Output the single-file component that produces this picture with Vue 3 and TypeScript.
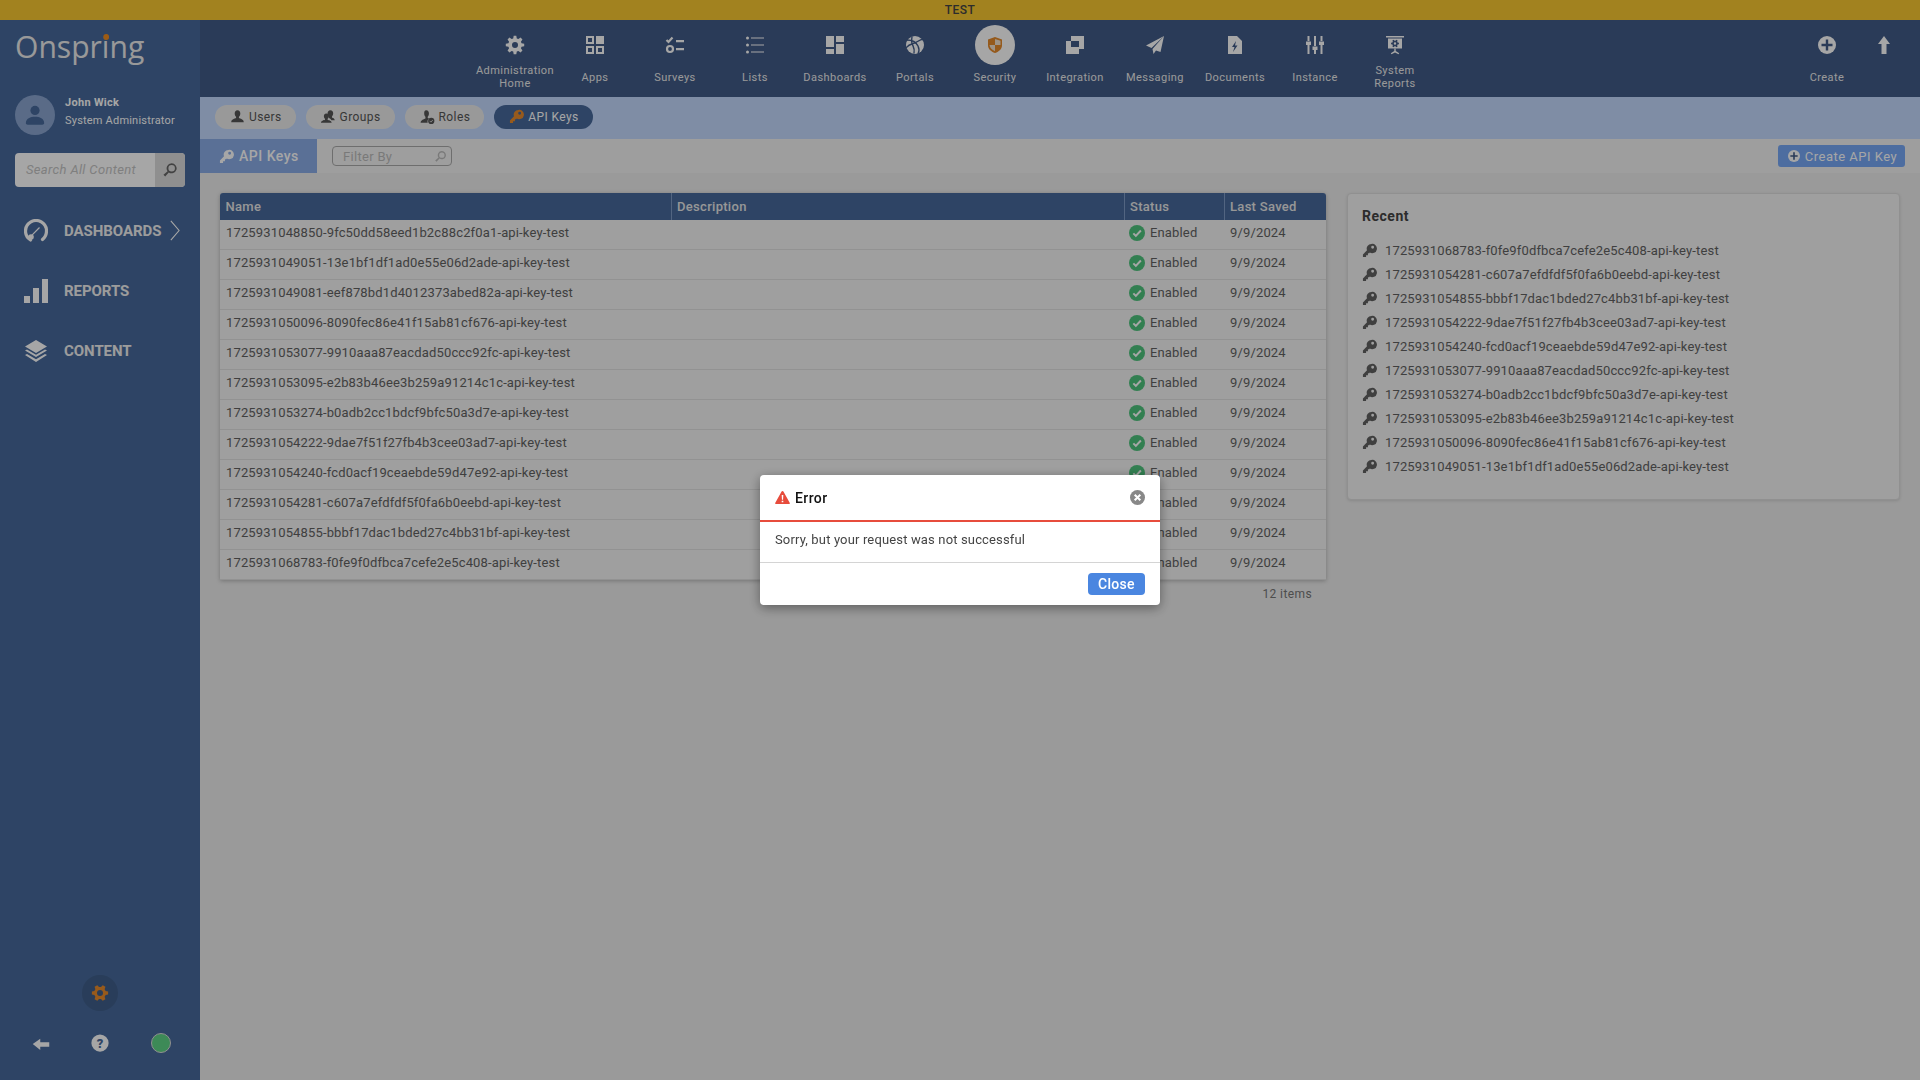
<script setup lang="ts">
// builds a cog outline, the font icons in the app are all slightly different sizes
function cog(cx: number, cy: number, outer: number, inner: number, hole: number, teeth: number) {
  const pts: string[] = []
  const step = (Math.PI * 2) / teeth
  for (let i = 0; i < teeth; i++) {
    const a = i * step
    const list: [number, number][] = [
      [inner, a - step * 0.34],
      [outer, a - step * 0.18],
      [outer, a + step * 0.18],
      [inner, a + step * 0.34]
    ]
    for (const [r, t] of list) {
      pts.push(`${(cx + r * Math.cos(t)).toFixed(2)} ${(cy + r * Math.sin(t)).toFixed(2)}`)
    }
  }
  return `M${pts.join('L')}ZM${cx - hole} ${cy}a${hole} ${hole} 0 1 0 ${hole * 2} 0a${hole} ${hole} 0 1 0 ${-hole * 2} 0Z`
}

const dark = '#415b87'
const key =
  '<path fill-rule="evenodd" d="M15 1.500a7.500 7.500 0 0 0-7 10.200L1.500 18.200v4.300h5v-3h3v-3h2l1-1.200A7.500 7.500 0 1 0 15 1.500zm2 3a2.300 2.300 0 1 1 0 4.600 2.300 2.300 0 0 1 0-4.600z"/>'

const icons: Record<string, string> = {
  admin: `<path fill-rule="evenodd" d="${cog(12, 12, 9.3, 6.8, 3, 8)}"/>`,
  apps: '<path fill-rule="evenodd" d="M3 3h8v8H3zM5 5v4h4V5zM13 3h8v8h-8zM3 13h8v8H3zM5 15v4h4v-4zM13 13h8v8h-8zM15 15v4h4v-4z"/>',
  surveys:
    '<path d="M3.500 7l2 2 4-4.500" fill="none" stroke="currentColor" stroke-width="2.200"/><path d="M13 7h8v2.200h-8zM13 15h8v2.200h-8z"/><circle cx="7" cy="16" r="3" fill="none" stroke="currentColor" stroke-width="2.200"/>',
  lists:
    '<circle cx="4.500" cy="5" r="1.500"/><circle cx="4.500" cy="12" r="1.500"/><circle cx="4.500" cy="19" r="1.500"/><path d="M8 4.400h13v1.200H8zM8 11.400h13v1.200H8zM8 18.400h13v1.200H8z"/>',
  dashboards: '<path d="M3 3h8v11H3zM13 3h8v6h-8zM13 11h8v10h-8zM3 16h8v5H3z"/>',
  portals: `<circle cx="12" cy="12" r="9"/><g fill="none" stroke="${dark}" stroke-width="1.400"><path d="M4 7c5 0 9 2 11 6s1 6 0 8"/><path d="M20 6c-4 1-7 4-11 5s-5 3-6 4"/><path d="M9 3.500c0 2-1 4 0 7s3 4 2 10"/></g>`,
  shield:
    '<path fill="#e58a2c" d="M12 4l7 2.500v5.500c0 4-2.800 6.500-7 8-4.200-1.500-7-4-7-8V6.500z"/><path fill="#f3e3cf" d="M12 6v6h5.500V7.800zM12 12H6.500c.3 2.800 2.500 4.900 5.500 6.200z"/>',
  integration: `<path d="M8 3h13v13H8z"/><path d="M3 8h13v13H3z"/><path fill="${dark}" d="M8 8h8v6H8z"/>`,
  messaging: '<path d="M21 3L3 12.500l5.500 2.500zM21 3L9.500 16l1 5 2.500-3.500 4.500 1.500z"/>',
  documents: `<path d="M5 3h9l5 5v13H5z"/><path fill="${dark}" d="M13 8l-4 6h2.500L10 19l4.500-6.500H12z"/>`,
  instance:
    '<path d="M4.500 3h2v5h-2zM4.500 12h2v9h-2zM11 3h2v10h-2zM11 17h2v4h-2zM17.500 3h2v5h-2zM17.500 12h2v9h-2zM3 8.500h5V12H3zM9.500 13.500h5V17h-5zM16 8.500h5V12h-5z"/>',
  reports: `<path d="M3 3h18v1.500H3zM5 5.500h14v10H5z"/><path fill="${dark}" fill-rule="evenodd" d="${cog(12, 10.5, 4, 2.8, 1.2, 6)}"/><path d="M11.300 15.500h1.400v2.500l3.500 2.200-.7 1L12 19.500l-3.500 1.700-.7-1 3.500-2.200z"/>`,
  create: `<circle cx="12" cy="12" r="9"/><path fill="${dark}" d="M10.800 6.500h2.400v4.300h4.300v2.400h-4.300v4.300h-2.400v-4.300H6.500v-2.400h4.300z"/>`,
  up: '<path d="M12 3l6 8h-3.500v10h-5V11H6z"/>',
  key,
  user: '<path d="M12 2c3 0 4.500 2.300 4.500 5 0 2.500-1 4.300-2.200 5.500v2c2 1 7.700 1.800 7.700 6.500H2c0-4.700 5.700-5.500 7.700-6.500v-2C8.500 11.300 7.500 9.500 7.500 7c0-2.700 1.500-5 4.500-5z"/>',
  group:
    '<path d="M15 2c3 0 4.500 2.200 4.500 4.800 0 2.200-.8 4-1.900 5.100v1.600c1.500.8 4.400 1.400 4.400 4.500h-5.500c-.5-2-2.500-3-4.300-3.700v-1.600c-1.100-1.100-1.900-2.800-1.900-4.900C10.800 4.200 12 2 15 2z"/><path d="M8.500 7c2.600 0 3.900 2 3.900 4.300 0 2-.8 3.500-1.800 4.500v1.500c1.700.8 6.400 1.400 6.400 4.700H0c0-3.300 4.700-3.900 6.400-4.700v-1.500c-1-1-1.800-2.500-1.800-4.500C4.600 9 5.900 7 8.500 7z"/>',
  role: '<path d="M10 2c3 0 4.300 2.300 4.300 5 0 2.300-.9 4.200-2 5.300V14c.8.500 1.500.8 2.200 1.100-1.500 1-2.500 2.800-2.500 4.900 0 .7.100 1.400.4 2H1c0-4.700 5.600-5.800 7.700-7v-2.700c-1.100-1.100-2-3-2-5.300C6.700 4.300 7 2 10 2z"/><circle cx="18" cy="19" r="5"/><path d="M15.500 19l2 2 3-3.500" fill="none" stroke="#d8d8d8" stroke-width="1.400"/>',
  search:
    '<path fill-rule="evenodd" d="M14.500 2a7.500 7.500 0 1 1-4.400 13.600L4.800 21.800 2.200 19.200l6.200-5.300A7.500 7.500 0 0 1 14.500 2zm0 2.600a4.900 4.900 0 1 0 0 9.800 4.900 4.900 0 0 0 0-9.800z"/>',
  gauge:
    '<path d="M6.500 21A10.500 10.500 0 1 1 22.500 12c0 3.500-1.500 6.400-4 8.500" fill="none" stroke="currentColor" stroke-width="3.200" stroke-linecap="round"/><circle cx="7" cy="18" r="2.800"/><path d="M8 16.200l7.500-7.700" stroke="currentColor" stroke-width="1.200" fill="none"/>',
  bars: '<path d="M0 17h6v7H0zM9 9h6v15H9zM18 0h6v24h-6z"/>',
  layers:
    '<path d="M12 1l11 6.500-11 6.500L1 7.500z"/><path d="M1 11.500l2-1.100 9 5.300 9-5.300 2 1.100-11 6.500z"/><path d="M1 16l2-1.100 9 5.300 9-5.300 2 1.100-11 7z"/>',
  chevron: '<path d="M2 1l9 10.500L2 22" fill="none" stroke="currentColor" stroke-width="1.200"/>',
  back: '<path d="M1 12L11 5v4.500h12v6H11V20z"/>',
  cog: `<path fill-rule="evenodd" d="${cog(12, 12, 11, 8, 4, 6)}"/>`,
  help: `<circle cx="12" cy="12" r="11.500"/><text x="12" y="18" font-size="17" font-weight="900" font-family="Roboto, sans-serif" text-anchor="middle" fill="#47699b">?</text>`,
  check: '<circle cx="12" cy="12" r="12"/><path d="M6.500 12.500l3.800 3.800 7.500-8" fill="none" stroke="#fff" stroke-width="3"/>',
  warn: '<path d="M12 1.500c.8 0 1.300.4 1.700 1.100l9.800 17.600c.6 1.100 0 2.300-1.300 2.300H1.800C.5 22.500-.1 21.300.5 20.200l9.800-17.600c.4-.7.900-1.100 1.700-1.100z"/><path fill="#fff" d="M10.700 8h2.600l-.4 7.500h-1.800zM10.700 17h2.600v2.600h-2.600z"/>',
  close: '<circle cx="12" cy="12" r="12"/><path d="M7.500 7.500l9 9M16.500 7.500l-9 9" fill="none" stroke="#fff" stroke-width="3.200"/>'
}

const navItems = [
  { label: 'Administration Home', icon: 'admin' },
  { label: 'Apps', icon: 'apps' },
  { label: 'Surveys', icon: 'surveys' },
  { label: 'Lists', icon: 'lists' },
  { label: 'Dashboards', icon: 'dashboards' },
  { label: 'Portals', icon: 'portals' },
  { label: 'Security', icon: 'shield', active: true },
  { label: 'Integration', icon: 'integration' },
  { label: 'Messaging', icon: 'messaging' },
  { label: 'Documents', icon: 'documents' },
  { label: 'Instance', icon: 'instance' },
  { label: 'System Reports', icon: 'reports' }
]

const pills = [
  { label: 'Users', icon: 'user' },
  { label: 'Groups', icon: 'group' },
  { label: 'Roles', icon: 'role' },
  { label: 'API Keys', icon: 'key', active: true }
]

const sideLinks = [
  { label: 'DASHBOARDS', icon: 'gauge', more: true },
  { label: 'REPORTS', icon: 'bars' },
  { label: 'CONTENT', icon: 'layers' }
]

const rows = [
  '1725931048850-9fc50dd58eed1b2c88c2f0a1',
  '1725931049051-13e1bf1df1ad0e55e06d2ade',
  '1725931049081-eef878bd1d4012373abed82a',
  '1725931050096-8090fec86e41f15ab81cf676',
  '1725931053077-9910aaa87eacdad50ccc92fc',
  '1725931053095-e2b83b46ee3b259a91214c1c',
  '1725931053274-b0adb2cc1bdcf9bfc50a3d7e',
  '1725931054222-9dae7f51f27fb4b3cee03ad7',
  '1725931054240-fcd0acf19ceaebde59d47e92',
  '1725931054281-c607a7efdfdf5f0fa6b0eebd',
  '1725931054855-bbbf17dac1bded27c4bb31bf',
  '1725931068783-f0fe9f0dfbca7cefe2e5c408'
]

const recent = [
  '1725931068783-f0fe9f0dfbca7cefe2e5c408',
  '1725931054281-c607a7efdfdf5f0fa6b0eebd',
  '1725931054855-bbbf17dac1bded27c4bb31bf',
  '1725931054222-9dae7f51f27fb4b3cee03ad7',
  '1725931054240-fcd0acf19ceaebde59d47e92',
  '1725931053077-9910aaa87eacdad50ccc92fc',
  '1725931053274-b0adb2cc1bdcf9bfc50a3d7e',
  '1725931053095-e2b83b46ee3b259a91214c1c',
  '1725931050096-8090fec86e41f15ab81cf676',
  '1725931049051-13e1bf1df1ad0e55e06d2ade'
]
</script>

<template>
  <div class="page">
    <div class="banner">TEST</div>
    <div class="shell">
      <aside class="sidebar">
        <div class="logo">Onspr<span class="logo-i">i</span>ng</div>
        <div class="profile">
          <div class="avatar">
            <svg viewBox="0 0 24 24" class="avatar-icon"><circle cx="12" cy="7" r="5" /><path d="M2 21c0-5 5-7 10-7s10 2 10 7c0 1-1 1.500-2 1.500H4c-1 0-2-.5-2-1.500z" /></svg>
          </div>
          <div class="profile-text">
            <div class="profile-name">John Wick</div>
            <div class="profile-role">System Administrator</div>
          </div>
        </div>
        <div class="search">
          <span class="search-text">Search All Content</span>
          <span class="search-btn"><svg viewBox="0 0 24 24" class="icon-16" v-html="icons.search"></svg></span>
        </div>
        <nav class="side-links">
          <div v-for="link in sideLinks" :key="link.label" class="side-link">
            <svg viewBox="0 0 24 24" class="side-icon" v-html="icons[link.icon]"></svg>
            <span class="side-label">{{ link.label }}</span>
            <svg v-if="link.more" viewBox="0 0 12 23" class="chevron" v-html="icons.chevron"></svg>
          </div>
        </nav>
        <div class="side-bottom">
          <div class="settings"><svg viewBox="0 0 24 24" class="icon-18" v-html="icons.cog"></svg></div>
          <div class="side-tools">
            <svg viewBox="0 0 24 24" class="tool-back" v-html="icons.back"></svg>
            <svg viewBox="0 0 24 24" class="tool-help" v-html="icons.help"></svg>
            <span class="status-dot"></span>
          </div>
        </div>
      </aside>

      <main class="main">
        <header class="topnav">
          <div v-for="item in navItems" :key="item.label" class="nav-item">
            <span class="nav-icon" :class="{ 'nav-icon-active': item.active }">
              <svg viewBox="0 0 24 24" class="icon-24" v-html="icons[item.icon]"></svg>
            </span>
            <span class="nav-label">{{ item.label }}</span>
          </div>
          <div class="nav-right">
            <div class="nav-item nav-create">
              <span class="nav-icon"><svg viewBox="0 0 24 24" class="icon-24" v-html="icons.create"></svg></span>
              <span class="nav-label">Create</span>
            </div>
            <svg viewBox="0 0 24 24" class="nav-up" v-html="icons.up"></svg>
          </div>
        </header>

        <div class="subnav">
          <div v-for="pill in pills" :key="pill.label" class="pill" :class="{ 'pill-active': pill.active }">
            <svg viewBox="0 0 24 24" class="icon-15" v-html="icons[pill.icon]"></svg>
            {{ pill.label }}
          </div>
        </div>

        <div class="tabbar">
          <div class="tab">
            <svg viewBox="0 0 24 24" class="icon-15" v-html="icons.key"></svg>
            API Keys
          </div>
          <div class="filter">
            <span>Filter By</span>
            <svg viewBox="0 0 24 24" class="icon-13" v-html="icons.search"></svg>
          </div>
          <button class="create-btn">
            <svg viewBox="0 0 24 24" class="icon-16" v-html="icons.create"></svg>
            Create API Key
          </button>
        </div>

        <div class="content">
          <section class="grid-wrap">
            <div class="grid">
              <div class="grid-head">
                <div class="cell">Name</div>
                <div class="cell">Description</div>
                <div class="cell">Status</div>
                <div class="cell">Last Saved</div>
              </div>
              <div v-for="row in rows" :key="row" class="grid-row">
                <div class="cell">{{ row }}-api-key-test</div>
                <div class="cell"></div>
                <div class="cell cell-status">
                  <svg viewBox="0 0 24 24" class="check" v-html="icons.check"></svg>
                  Enabled
                </div>
                <div class="cell cell-date">9/9/2024</div>
              </div>
            </div>
            <div class="grid-count">12 items</div>
          </section>

          <section class="recent">
            <h3 class="recent-title">Recent</h3>
            <div v-for="item in recent" :key="item" class="recent-item">
              <svg viewBox="0 0 24 24" class="icon-15" v-html="icons.key"></svg>
              <span>{{ item }}-api-key-test</span>
            </div>
          </section>
        </div>
      </main>
    </div>

    <div class="overlay">
      <div class="modal">
        <div class="modal-head">
          <svg viewBox="0 0 24 24" class="warn" v-html="icons.warn"></svg>
          <span class="modal-title">Error</span>
          <svg viewBox="0 0 24 24" class="modal-close" v-html="icons.close"></svg>
        </div>
        <div class="modal-body">Sorry, but your request was not successful</div>
        <div class="modal-foot">
          <button class="close-btn">Close</button>
        </div>
      </div>
    </div>
  </div>
</template>

<style scoped>
.page {
  display: flex;
  flex-direction: column;
  height: 1080px;
  overflow: hidden;
  font-family: Roboto, "Liberation Sans", sans-serif;
  font-size: 13px;
  letter-spacing: 0.15px;
  color: #626262;
  background: #ededed;
}
svg {
  fill: currentColor;
  flex-shrink: 0;
  display: block;
}
.icon-13 { width: 13px; height: 13px; }
.icon-15 { width: 15px; height: 15px; }
.icon-16 { width: 16px; height: 16px; }
.icon-18 { width: 18px; height: 18px; }
.icon-24 { width: 24px; height: 24px; }

.banner {
  height: 20px;
  line-height: 20px;
  flex-shrink: 0;
  text-align: center;
  font-size: 12px;
  font-weight: 500;
  letter-spacing: 0.5px;
  color: #444;
  background: #f9c831;
}
.shell {
  flex: 1;
  display: flex;
  min-height: 0;
}

/* sidebar */
.sidebar {
  width: 200px;
  flex-shrink: 0;
  display: flex;
  flex-direction: column;
  padding: 12px 15px 0;
  box-sizing: border-box;
  background: #47699b;
  color: #fff;
}
.logo {
  height: 38px;
  font-family: "Open Sans", sans-serif;
  font-size: 31px;
  font-weight: 400;
  line-height: 28px;
  letter-spacing: 0;
  white-space: nowrap;
  color: #ececec;
  transform: scaleX(0.97);
  transform-origin: left;
}
.logo-i {
  position: relative;
}
.logo-i::before {
  content: "";
  position: absolute;
  left: 1px;
  top: 9px;
  width: 6px;
  height: 6px;
  border-radius: 50%;
  background: #f28c1e;
}
.profile {
  display: flex;
  align-items: center;
  gap: 10px;
  margin-top: 25px;
}
.profile-text {
  margin-bottom: 4px;
}
.avatar {
  width: 40px;
  height: 40px;
  border-radius: 50%;
  display: flex;
  align-items: center;
  justify-content: center;
  background: #8aa5d0;
  color: #47699b;
  flex-shrink: 0;
}
.avatar-icon { width: 22px; height: 22px; }
.profile-name {
  font-size: 11px;
  font-weight: 700;
  line-height: 16px;
  letter-spacing: 0.3px;
}
.profile-role {
  font-size: 11px;
  line-height: 20px;
  letter-spacing: 0.2px;
}
.search {
  display: flex;
  height: 34px;
  margin-top: 18px;
  border-radius: 4px;
  overflow: hidden;
  background: #fff;
  color: #c4c4c4;
}
.search-text {
  flex: 1;
  font-size: 13px;
  font-style: italic;
  line-height: 34px;
  padding-left: 11px;
  letter-spacing: 0.35px;
}
.search-btn {
  width: 30px;
  display: flex;
  align-items: center;
  justify-content: center;
  background: #dcdcdc;
  color: #666;
}
.side-links {
  margin-top: 13.5px;
}
.side-link {
  height: 60px;
  display: flex;
  align-items: center;
  margin-left: 9px;
}
.side-icon { width: 24px; height: 24px; }
.side-label {
  margin-left: 16px;
  font-size: 15px;
  font-weight: 700;
  letter-spacing: -0.05px;
  color: #f0f0f0;
}
.chevron {
  width: 11px;
  height: 21px;
  margin-left: 8px;
}
.side-bottom {
  margin-top: auto;
  display: flex;
  flex-direction: column;
  align-items: center;
  padding-bottom: 27px;
}
.settings {
  width: 36px;
  height: 36px;
  border-radius: 50%;
  display: flex;
  align-items: center;
  justify-content: center;
  background: #405f8a;
  color: #e98a2c;
}
.side-tools {
  display: flex;
  align-items: center;
  justify-content: space-between;
  width: 139px;
  margin: 22px 0 0 2px;
}
.tool-back { width: 18px; height: 18px; margin-top: 2px; }
.tool-help { width: 18px; height: 18px; }
.status-dot {
  width: 20px;
  height: 20px;
  box-sizing: border-box;
  border-radius: 50%;
  border: 1px solid #ddd;
  background: #5fd486;
}

/* top navigation */
.main {
  flex: 1;
  min-width: 0;
  display: flex;
  flex-direction: column;
}
.topnav {
  height: 77px;
  flex-shrink: 0;
  display: flex;
  padding-left: 275px;
  background: #415b87;
  color: #fff;
}
.nav-item {
  width: 80px;
  position: relative;
  display: flex;
  flex-direction: column;
  align-items: center;
  color: #fff;
}
.nav-icon {
  width: 40px;
  height: 40px;
  margin-top: 5px;
  border-radius: 50%;
  display: flex;
  align-items: center;
  justify-content: center;
}
.nav-icon-active {
  background: #fff;
}
.nav-label {
  position: absolute;
  top: 44px;
  left: 0;
  right: 0;
  height: 26px;
  display: flex;
  align-items: center;
  justify-content: center;
  text-align: center;
  font-size: 11px;
  line-height: 13px;
  letter-spacing: 0.45px;
  color: #ececec;
}
.nav-right {
  margin-left: auto;
  display: flex;
  padding-right: 24px;
}
.nav-create {
  width: 64px;
}
.nav-up {
  width: 24px;
  height: 24px;
  margin: 13px 0 0 13px;
  color: #fff;
}

/* pills */
.subnav {
  height: 42px;
  flex-shrink: 0;
  box-sizing: border-box;
  display: flex;
  align-items: center;
  gap: 10px;
  padding: 0 0 3px 15px;
  background: #c3d9fe;
}
.pill {
  height: 24px;
  display: flex;
  align-items: center;
  gap: 4px;
  padding: 0 14px 0 15px;
  border-radius: 12px;
  font-size: 12px;
  letter-spacing: 0.4px;
  background: #ececec;
  color: #555;
}
.pill-active {
  background: #47699b;
  color: #fff;
}
.pill-active svg {
  color: #e98a2c;
}

/* tab row */
.tabbar {
  height: 34px;
  flex-shrink: 0;
  display: flex;
  align-items: center;
  background: #f3f3f3;
}
.tab {
  width: 117px;
  height: 34px;
  box-sizing: border-box;
  display: flex;
  align-items: center;
  gap: 5px;
  padding-left: 19px;
  font-size: 14px;
  font-weight: 500;
  letter-spacing: 0.5px;
  background: #8aace7;
  color: #fff;
}
.filter {
  width: 120px;
  height: 20px;
  box-sizing: border-box;
  margin-left: 15px;
  display: flex;
  align-items: center;
  justify-content: space-between;
  padding: 0 4px 0 10px;
  border: 1px solid #aaa;
  border-radius: 4px;
  font-size: 13px;
  letter-spacing: 0.3px;
  color: #bbb;
}
.create-btn {
  margin-left: auto;
  margin-right: 15px;
  width: 127px;
  height: 22px;
  display: flex;
  align-items: center;
  justify-content: center;
  gap: 3px;
  padding: 0;
  border: none;
  border-radius: 3px;
  font: inherit;
  font-size: 13px;
  letter-spacing: 0.5px;
  background: #77a8f6;
  color: #fff;
}

/* content */
.content {
  display: flex;
  align-items: flex-start;
  gap: 21px;
  padding: 20px 20px 0;
}
.grid-wrap {
  width: 1106px;
  flex-shrink: 0;
}
.grid {
  border-radius: 3px 3px 0 0;
  box-shadow: 0 1px 4px rgba(0, 0, 0, 0.25);
  background: #f4f4f4;
}
.grid-head,
.grid-row {
  display: grid;
  grid-template-columns: 452px 453px 100px 101px;
}
.grid-head {
  height: 27px;
  line-height: 27px;
  font-weight: 500;
  letter-spacing: 0.3px;
  border-radius: 3px 3px 0 0;
  background: #47699b;
  color: #e8e8e8;
}
.grid-head .cell {
  padding-left: 5px;
  border-right: 1px solid #7f9cc6;
}
.grid-head .cell:first-child {
  padding-left: 5.5px;
}
.grid-head .cell:last-child {
  border-right: none;
}
.grid-row {
  height: 30px;
  box-sizing: border-box;
  line-height: 25px;
  border-bottom: 1px solid #e0e0e0;
}
.grid-row .cell {
  padding-left: 6px;
  white-space: nowrap;
}
.grid-row .cell-status {
  display: flex;
  align-items: center;
  gap: 5px;
  height: 26px;
  line-height: 26px;
  padding-left: 4px;
}
.grid-row .cell-date {
  padding-left: 5px;
}
.check {
  width: 16px;
  height: 16px;
  color: #4ec47d;
}
.grid-count {
  margin-top: 7px;
  padding-right: 14px;
  text-align: right;
  font-size: 12px;
  letter-spacing: 0.4px;
  color: #777;
}
.recent {
  flex: 1;
  height: 307px;
  box-sizing: border-box;
  padding: 12px 14px 0;
  border-radius: 4px;
  border: 1px solid #ddd;
  box-shadow: 0 1px 3px rgba(0, 0, 0, 0.12);
  background: #f4f4f4;
}
.recent-title {
  margin: 0 0 12px;
  font-size: 14px;
  font-weight: 700;
  line-height: 20px;
  letter-spacing: 0.5px;
  color: #444;
}
.recent-item {
  display: flex;
  align-items: center;
  gap: 8px;
  height: 24px;
  white-space: nowrap;
}

/* error dialog */
.overlay {
  position: fixed;
  inset: 0;
  display: flex;
  align-items: center;
  justify-content: center;
  background: rgba(0, 0, 0, 0.35);
}
.modal {
  width: 400px;
  height: 130px;
  display: flex;
  flex-direction: column;
  border-radius: 4px;
  box-shadow: 0 3px 12px rgba(0, 0, 0, 0.4);
  background: #fff;
  color: #444;
}
.modal-head {
  height: 47px;
  flex-shrink: 0;
  box-sizing: border-box;
  display: flex;
  align-items: center;
  gap: 5px;
  padding: 0 15px;
  border-bottom: 2px solid #e74c3c;
}
.warn {
  width: 15px;
  height: 15px;
  color: #e74c3c;
}
.modal-title {
  flex: 1;
  font-size: 14px;
  font-weight: 500;
  letter-spacing: 0.4px;
  color: #111;
}
.modal-close {
  width: 15px;
  height: 15px;
  color: #888;
}
.modal-body {
  height: 41px;
  flex-shrink: 0;
  box-sizing: border-box;
  padding: 0 15px;
  line-height: 36px;
  border-bottom: 1px solid #d4d4d4;
}
.modal-foot {
  flex: 1;
  display: flex;
  align-items: center;
  justify-content: flex-end;
  padding-right: 15px;
}
.close-btn {
  width: 57px;
  height: 22px;
  padding: 0;
  border: none;
  border-radius: 4px;
  font: inherit;
  font-size: 14px;
  font-weight: 500;
  letter-spacing: 0.3px;
  background: #4a86e0;
  color: #fff;
}
</style>
